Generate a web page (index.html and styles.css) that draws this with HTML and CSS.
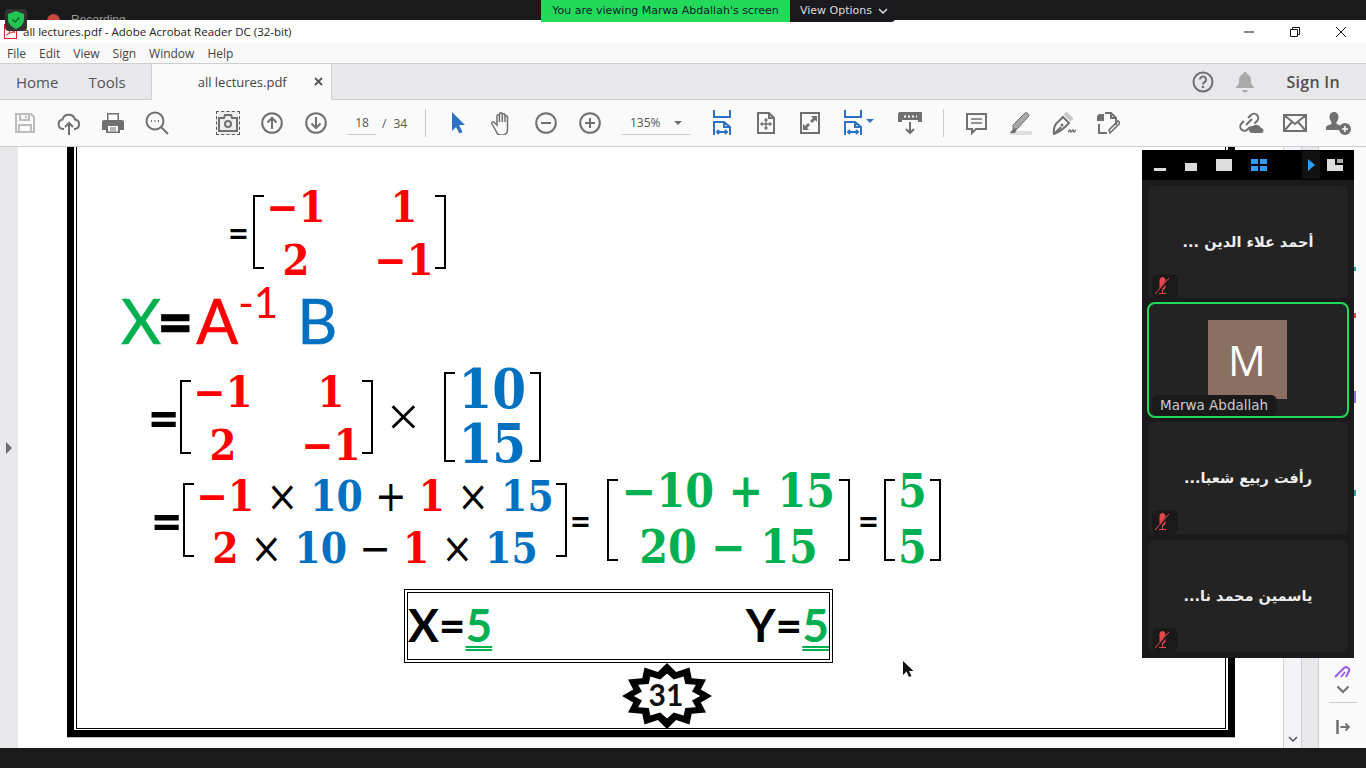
FILE: index.html
```html
<!DOCTYPE html>
<html lang="en">
<head>
    <meta charset="UTF-8">
    <title>all lectures.pdf - Adobe Acrobat Reader DC (32-bit)</title>
    <link rel="stylesheet" href="styles.css">
</head>
<body>
<div class="screen">
    <div class="topbar">
        <span class="rec-dot"></span>
        <span class="rec-text">Recording</span>
    </div>
    <div class="shield">
        <svg width="16" height="18" viewBox="0 0 16 18"><path d="M8 0l8 3v5c0 5-3.500 8-8 10-4.500-2-8-5-8-10V3z" fill="#23c552"/><path d="M4.500 8.500l2.500 2.500 4.500-4.500" fill="none" stroke="#0c6b2c" stroke-width="1.500"/></svg>
    </div>
    <div class="banner">
        <span class="banner-msg">You are viewing Marwa Abdallah's screen</span>
        <span class="banner-opt">View Options
            <svg width="10" height="6" viewBox="0 0 10 6"><path d="M1 1l4 4 4-4" fill="none" stroke="#ddd" stroke-width="1.500"/></svg>
        </span>
    </div>

    <div class="titlebar">
        <svg class="pdf-icon" width="13" height="15" viewBox="0 0 13 15"><rect x="0.500" y="0.500" width="12" height="14" fill="#fff" stroke="#d8232a"/><path d="M2.500 11c3-1 4-4 3.500-8 1 3 3 5 5 5-3 0-6 1-8.500 3z" fill="none" stroke="#d8232a"/></svg>
        <span class="title-text">all lectures.pdf - Adobe Acrobat Reader DC (32-bit)</span>
        <div class="win-btns">
            <span class="win-btn"><svg width="12" height="12" viewBox="0 0 12 12"><path d="M1 6h10" stroke="#111"/></svg></span>
            <span class="win-btn"><svg width="12" height="12" viewBox="0 0 12 12"><path d="M1.500 3.500h7v7h-7zM3.500 3.500v-2h7v7h-2" fill="none" stroke="#111"/></svg></span>
            <span class="win-btn"><svg width="12" height="12" viewBox="0 0 12 12"><path d="M1 1l10 10M11 1L1 11" stroke="#111"/></svg></span>
        </div>
    </div>

    <nav class="menubar">
        <span>File</span><span>Edit</span><span>View</span><span>Sign</span><span>Window</span><span>Help</span>
    </nav>

    <div class="tabbar">
        <span class="tab-link home">Home</span>
        <span class="tab-link tools">Tools</span>
        <div class="doc-tab">
            <span>all lectures.pdf</span>
            <svg class="tab-close" width="9" height="9" viewBox="0 0 9 9"><path d="M1 1l7 7M8 1L1 8" stroke="#555" stroke-width="1.800"/></svg>
        </div>
        <div class="tab-right">
            <svg width="24" height="24" viewBox="0 0 24 24"><circle cx="12" cy="12" r="9.500" class="ln"/><path d="M9 9.500a3 3 0 1 1 4.500 2.600c-1 .6-1.500 1.200-1.500 2.400" class="ln"/><circle cx="12" cy="17" r="1.300" fill="#707070"/></svg>
            <svg class="bell" width="20" height="22" viewBox="0 0 20 22"><path d="M10 1c1.200 0 2 .8 2 2 3 1 4 3.500 4 7 0 3 1 4.500 3 6v1H1v-1c2-1.500 3-3 3-6 0-3.500 1-6 4-7 0-1.200.8-2 2-2zM7.500 19h5a2.500 2.500 0 0 1-5 0z" fill="#aaa"/></svg>
            <span class="sign-in">Sign In</span>
        </div>
    </div>

    <div class="toolbar">
        <span class="tool"><svg width="24" height="24" viewBox="0 0 24 24"><path d="M3 3h15l3 3v15H3zM7 3v6h9V3M6 21v-7h12v7M13 5v2" fill="none" stroke="#bcbcbc" stroke-width="2"/></svg></span>
        <span class="tool"><svg width="24" height="24" viewBox="0 0 24 24"><path d="M7 18H6a4.800 4.800 0 0 1-.5-9.500A6.500 6.500 0 0 1 18 8.500a4.800 4.800 0 0 1 0 9.500h-1M12 24V12M8 16l4-4 4 4" class="ln"/></svg></span>
        <span class="tool"><svg width="24" height="24" viewBox="0 0 24 24"><path d="M6 9V2h12v7h3a2 2 0 0 1 2 2v8h-4v3H5v-3H1v-8a2 2 0 0 1 2-2z" fill="#707070"/><path d="M7.500 3.500h9V9h-9zM7 15h10v5.500H7z" fill="#fafafa"/><path d="M9 17h6M9 19h6" stroke="#707070"/></svg></span>
        <span class="tool"><svg width="24" height="24" viewBox="0 0 24 24"><circle cx="10" cy="10" r="8.500" class="ln"/><path d="M16 16l7 7" class="ln"/><path d="M6 10h1M9.500 10h1M13 10h1" stroke="#707070" stroke-width="2"/></svg></span>

        <span class="tool snap"><svg width="20" height="18" viewBox="0 0 20 18"><path d="M1 4h5l1-3h6l1 3h5v13H1z" class="ln"/><circle cx="10" cy="10" r="3" class="ln"/></svg></span>
        <span class="tool"><svg width="24" height="24" viewBox="0 0 24 24"><circle cx="12" cy="12" r="9.800" class="ln"/><path d="M12 18V7M7.500 11.500L12 7l4.500 4.500" class="ln"/></svg></span>
        <span class="tool"><svg width="24" height="24" viewBox="0 0 24 24"><circle cx="12" cy="12" r="9.800" class="ln"/><path d="M12 6v11M7.500 12.500L12 17l4.500-4.500" class="ln"/></svg></span>
        <div class="page-box"><span class="page-num">18</span><span class="page-sep">/</span><span>34</span></div>
        <span class="tool-sep first"></span>

        <span class="tool"><svg width="24" height="24" viewBox="0 0 24 24"><path d="M6 1l13 13h-6l3.500 7-3 1.500L10 16l-4 4z" fill="#2d72c4"/></svg></span>
        <span class="tool"><svg width="24" height="24" viewBox="0 0 24 24"><path d="M6 20l-4-7c-.8-1.600 1-2.700 2.200-1.500L7 14V5c0-1.800 2.500-1.800 2.500 0v6-8c0-1.800 2.800-1.800 2.800 0v8-7c0-1.800 2.700-1.800 2.700 0v7-5c0-1.800 2.500-1.800 2.500 0v12c0 4-2 6-5 6h-2c-2 0-3.500-.8-4.500-4z" fill="none" stroke="#707070" stroke-width="1.500"/></svg></span>
        <span class="tool"><svg width="24" height="24" viewBox="0 0 24 24"><circle cx="12" cy="12" r="9.800" class="ln"/><path d="M7 12h10" class="ln"/></svg></span>
        <span class="tool"><svg width="24" height="24" viewBox="0 0 24 24"><circle cx="12" cy="12" r="9.800" class="ln"/><path d="M7 12h10M12 7v10" class="ln"/></svg></span>
        <div class="zoom-box"><span>135%</span><span class="caret"></span></div>

        <span class="tool"><svg width="20" height="26" viewBox="0 0 20 26"><path d="M2 0v7h16V0M2 25V12h10l6 5v8M12 12v5h6M5 22h10M7 20l-2 2 2 2M13 20l2 2-2 2" fill="none" stroke="#2d72c4" stroke-width="2"/></svg></span>
        <span class="tool"><svg width="24" height="24" viewBox="0 0 24 24"><path d="M4 2h11l5 5v15H4zM15 2v5h5" class="ln"/><path d="M12 8v10M7 13h10M10.500 9.500L12 8l1.500 1.500M10.500 16.500L12 18l1.500-1.500M8.500 11.500L7 13l1.500 1.500M15.500 11.500L17 13l-1.500 1.500" fill="none" stroke="#707070" stroke-width="1.400"/></svg></span>
        <span class="tool"><svg width="24" height="24" viewBox="0 0 24 24"><path d="M3 2h18v20H3z" class="ln"/><path d="M13 5h6v6l-2-2-3 3-2-2 3-3zM11 19H5v-6l2 2 3-3 2 2-3 3z" fill="#707070"/></svg></span>
        <span class="tool fit-menu"><svg width="20" height="26" viewBox="0 0 20 26"><path d="M2 0v7h16V0M2 25V12h10l6 5v8M12 12v5h6M5 22h10M7 20l-2 2 2 2M13 20l2 2-2 2" fill="none" stroke="#2d72c4" stroke-width="2"/></svg><span class="caret blue"></span></span>
        <span class="tool"><svg width="24" height="24" viewBox="0 0 24 24"><path d="M1 2h22v8h-3M4 10H1V2" class="ln"/><path d="M2 3h20v6H2z" fill="#707070"/><path d="M6 5.500h2M10 5.500h2M14 5.500h2M18 5.500h1" stroke="#fafafa" stroke-width="2"/><path d="M12 11v11M8 18l4 4 4-4" class="ln"/></svg></span>
        <span class="tool-sep second"></span>

        <span class="tool"><svg width="24" height="24" viewBox="0 0 24 24"><path d="M3 3h19v15H12l-4 4v-4H3z" class="ln"/><path d="M7 8h11M7 12h11" stroke="#707070" stroke-width="1.500"/></svg></span>
        <span class="tool"><svg width="24" height="24" viewBox="0 0 24 24"><path d="M2 20h22v4H2z" fill="#dedede"/><path d="M5 14L17 2c1.500-1.500 5 1.500 3.500 3.500L9 18H5z" fill="#a8a8a8" stroke="#707070"/><path d="M5 18l-3 4h5l2-4z" fill="#707070"/></svg></span>
        <span class="tool"><svg width="24" height="24" viewBox="0 0 24 24"><path d="M2 23c-1-6 1-10 5-13l4-4 6 6-4 4c-3 3-6 5-11 7zM3 22l6-6" class="ln"/><circle cx="10" cy="14" r="1.500" fill="#707070"/><path d="M13 2l7 7" stroke="#c8c8c8" stroke-width="4"/><path d="M16 21l2-2 1 2 2-2 1 2 2-2" fill="none" stroke="#707070" stroke-width="1.400"/></svg></span>
        <span class="tool"><svg width="24" height="24" viewBox="0 0 24 24"><path d="M1 5l2-2h5v7H1z" fill="#707070"/><path d="M9 2h6l5 5v7M15 2v5h5M3 13v9h8" class="ln"/><path d="M14 22l-1-3 9-9 2 2-9 9z" fill="none" stroke="#707070" stroke-width="1.600"/></svg></span>

        <div class="tool-right">
            <span class="tool"><svg width="26" height="24" viewBox="0 0 26 24"><path d="M8 14l6-6M6 10l-2.500 2.500a4 4 0 0 0 6 6L12 16M10 7l3-3a4 4 0 0 1 6 6l-2.500 2.500" class="ln"/><path d="M14 22a3.500 3.500 0 0 1 1-7 5 5 0 0 1 8 2 2.500 2.500 0 0 1 0 5z" fill="#707070"/></svg></span>
            <span class="tool"><svg width="24" height="18" viewBox="0 0 24 18"><path d="M1 1h22v16H1zM1 1l11 9 11-9M1 17l8-9M23 17l-8-9" class="ln"/></svg></span>
            <span class="tool"><svg width="26" height="24" viewBox="0 0 26 24"><path d="M8 1c3 0 4.500 2.500 4.500 5 0 2-1 4-2 5v2l4 1.500V19H0v-3c0-1 4-2.500 5.500-3v-2c-1-1-2-3-2-5 0-2.500 1.500-5 4.500-5z" fill="#707070"/><circle cx="19" cy="18" r="6" fill="#707070"/><path d="M16 18h6M19 15v6" stroke="#fafafa" stroke-width="1.600"/></svg></span>
        </div>
    </div>

    <div class="workspace">
        <div class="left-pane"><span class="pane-arrow"></span></div>

        <div class="viewer">
            <div class="page">
                <div class="page-inner">
                    <div class="row r1">
                        <span class="eq eq-sm">=</span>
                        <div class="matrix m1">
                            <span class="br br-l"></span>
                            <div class="cells two red">
                                <span>−1</span><span>1</span>
                                <span>2</span><span>−1</span>
                            </div>
                            <span class="br br-r"></span>
                        </div>
                    </div>

                    <div class="row r2">
                        <span class="big green">X</span><span class="big eq-big">=</span><span class="big red-l">A</span><sup class="sup">-1</sup><span class="big blue-l b">B</span>
                    </div>

                    <div class="row r3">
                        <span class="eq eq-md">=</span>
                        <div class="matrix m1">
                            <span class="br br-l"></span>
                            <div class="cells two red">
                                <span>−1</span><span>1</span>
                                <span>2</span><span>−1</span>
                            </div>
                            <span class="br br-r"></span>
                        </div>
                        <span class="times">×</span>
                        <div class="matrix m2">
                            <span class="br br-l"></span>
                            <div class="cells one blue">
                                <span>10</span><span>15</span>
                            </div>
                            <span class="br br-r"></span>
                        </div>
                    </div>

                    <div class="row r4">
                        <span class="eq eq-md">=</span>
                        <div class="matrix m3">
                            <span class="br br-l"></span>
                            <div class="cells one wide">
                                <span><b class="red">−1</b> <i>×</i> <b class="blue">10</b> <i>+</i> <b class="red">1</b> <i>×</i> <b class="blue">15</b></span>
                                <span><b class="red">2</b> <i>×</i> <b class="blue">10</b> <i>−</i> <b class="red">1</b> <i>×</i> <b class="blue">15</b></span>
                            </div>
                            <span class="br br-r"></span>
                        </div>
                        <span class="eq eq-sm e2">=</span>
                        <div class="matrix m4">
                            <span class="br br-l"></span>
                            <div class="cells one green-d">
                                <span>−10 + 15</span><span>20 − 15</span>
                            </div>
                            <span class="br br-r"></span>
                        </div>
                        <span class="eq eq-sm e3">=</span>
                        <div class="matrix m5">
                            <span class="br br-l"></span>
                            <div class="cells one green-d">
                                <span>5</span><span>5</span>
                            </div>
                            <span class="br br-r"></span>
                        </div>
                    </div>

                    <div class="answer">
                        <span class="ans">X=<u>5</u></span>
                        <span class="ans">Y=<u>5</u></span>
                    </div>

                    <div class="star">
                        <svg width="92" height="66" viewBox="-46 -33 92 66">
                            <polygon points="45,0 33.800,6.500 39,16.500 24.700,17.700 22.500,28.600 9.100,24.100 0,33 -9.100,24.100 -22.500,28.600 -24.700,17.700 -39,16.500 -33.800,6.500 -45,0 -33.800,-6.500 -39,-16.500 -24.700,-17.700 -22.500,-28.600 -9.100,-24.100 0,-33 9.100,-24.100 22.500,-28.600 24.700,-17.700 39,-16.500 33.800,-6.500"/>
                            <polygon fill="#fff" transform="scale(.74 .68)" points="45,0 33.800,6.500 39,16.500 24.700,17.700 22.500,28.600 9.100,24.100 0,33 -9.100,24.100 -22.500,28.600 -24.700,17.700 -39,16.500 -33.800,6.500 -45,0 -33.800,-6.500 -39,-16.500 -24.700,-17.700 -22.500,-28.600 -9.100,-24.100 0,-33 9.100,-24.100 22.500,-28.600 24.700,-17.700 39,-16.500 33.800,-6.500"/>
                        </svg>
                        <span class="star-num">31</span>
                    </div>
                </div>
            </div>
        </div>

        <div class="scroll-col"><svg width="10" height="6" viewBox="0 0 10 6"><path d="M1 1l4 4 4-4" fill="none" stroke="#555" stroke-width="1.500"/></svg></div>
        <div class="grey-col"></div>
        <div class="right-pane">
            <span class="peek p1"></span>
            <span class="peek p2"></span>
            <span class="peek p3"></span>
            <span class="peek p4"></span>
            <svg class="pen" width="18" height="12" viewBox="0 0 18 12"><path d="M1 11L10 2c2-2 6 0 5 3l-3 6M7 11l4-5" fill="none" stroke="#9b5de5" stroke-width="2"/></svg>
            <svg class="chev" width="14" height="9" viewBox="0 0 14 9"><path d="M1.500 1.500L7 7l5.500-5.500" fill="none" stroke="#707070" stroke-width="2"/></svg>
            <span class="pane-line"></span>
            <svg class="collapse" width="14" height="14" viewBox="0 0 14 14"><path d="M1.500 0v14" stroke="#707070" stroke-width="2.500"/><path d="M4.500 7H13M9.500 3.500L13 7l-3.500 3.500" fill="none" stroke="#707070" stroke-width="1.800"/></svg>
        </div>
    </div>

    <div class="bottombar"></div>

    <!-- zoom video panel sits over the reader window -->
    <aside class="video-panel">
        <div class="vp-head">
            <span class="vp-i small"></span>
            <span class="vp-i medium"></span>
            <span class="vp-i large"></span>
            <span class="vp-grid"><i></i><i></i><i></i><i></i></span>
            <span class="vp-arrow"><i></i></span>
            <span class="vp-share"><i></i></span>
        </div>
        <div class="tile">
            <span class="tile-name" dir="rtl">أحمد علاء الدين ...</span>
            <span class="mute"><svg width="18" height="18" viewBox="0 0 18 18"><path d="M6 3a2.500 2.500 0 0 1 5 0v7a2.500 2.500 0 0 1-5 0zM5 16.500h7M8.500 13v3" fill="#e5484d" stroke="#e5484d"/><path d="M2.500 17L15.500 1" stroke="#1a1a1a" stroke-width="2.500"/><path d="M1 17L15 1" stroke="#e5484d"/></svg></span>
        </div>
        <div class="tile active">
            <div class="avatar">M</div>
            <span class="name-tag">Marwa Abdallah</span>
        </div>
        <div class="tile">
            <span class="tile-name" dir="rtl">رأفت ربيع شعبا...</span>
            <span class="mute"><svg width="18" height="18" viewBox="0 0 18 18"><path d="M6 3a2.500 2.500 0 0 1 5 0v7a2.500 2.500 0 0 1-5 0zM5 16.500h7M8.500 13v3" fill="#e5484d" stroke="#e5484d"/><path d="M2.500 17L15.500 1" stroke="#1a1a1a" stroke-width="2.500"/><path d="M1 17L15 1" stroke="#e5484d"/></svg></span>
        </div>
        <div class="tile">
            <span class="tile-name" dir="rtl">ياسمين محمد نا...</span>
            <span class="mute"><svg width="18" height="18" viewBox="0 0 18 18"><path d="M6 3a2.500 2.500 0 0 1 5 0v7a2.500 2.500 0 0 1-5 0zM5 16.500h7M8.500 13v3" fill="#e5484d" stroke="#e5484d"/><path d="M2.500 17L15.500 1" stroke="#1a1a1a" stroke-width="2.500"/><path d="M1 17L15 1" stroke="#e5484d"/></svg></span>
        </div>
    </aside>

    <svg class="cursor" width="12" height="19" viewBox="0 0 12 19"><path d="M1 1v14l3.500-3.500L7 17l2.500-1L7 11h4.500z" fill="#111"/></svg>
</div>
</body>
</html>
```

FILE: styles.css
```css
* {
    box-sizing: border-box;
}
html, body {
    margin: 0;
    padding: 0;
}
body {
    font-family: "Open Sans", "Noto Sans", sans-serif;
    color: #444;
    background-color: #1a1a1a;
}
.screen {
    position: relative;
    width: 1366px;
    height: 768px;
    overflow: hidden;
    display: flex;
    flex-direction: column;
}
.ln {
    fill: none;
    stroke: #707070;
    stroke-width: 2;
}

/* top strip */
.topbar {
    height: 20px;
    flex: none;
    overflow: hidden;
    background-color: #1a1a1a;
    display: flex;
    align-items: flex-start;
    padding: 13px 0 0 47px;
    color: #999;
    font-size: 12px;
    font-family: "Liberation Sans", sans-serif;
}
.rec-dot {
    width: 13px;
    height: 13px;
    border-radius: 50%;
    background-color: #c6493f;
    margin-top: 1px;
}
.rec-text {
    margin-left: 11px;
    height: 7px;
    overflow: hidden;
    line-height: 14px;
}
.shield {
    position: absolute;
    left: 5px;
    top: 9px;
    width: 22px;
    height: 22px;
    border-radius: 4px;
    background-color: #333;
    display: flex;
    align-items: center;
    justify-content: center;
}
.banner {
    position: absolute;
    left: 541px;
    top: 0;
    height: 22px;
    display: flex;
    font-family: "DejaVu Sans", sans-serif;
    font-size: 11px;
    line-height: 22px;
}
.banner-msg {
    width: 249px;
    background-color: #23d959;
    color: #123;
    text-align: center;
}
.banner-opt {
    width: 105px;
    background-color: #1a1a1e;
    color: #ddd;
    border-bottom-right-radius: 4px;
    padding-left: 10px;
}
.banner-opt svg {
    margin-left: 2px;
}

/* window chrome */
.titlebar {
    height: 23px;
    flex: none;
    background-color: #fff;
    display: flex;
    align-items: center;
    padding-left: 4px;
    font-size: 11.5px;
    color: #222;
}
.title-text {
    margin-left: 6px;
}
.win-btns {
    margin-left: auto;
    display: flex;
    padding-right: 2px;
}
.win-btn {
    width: 46px;
    display: flex;
    justify-content: center;
}
.menubar {
    height: 21px;
    flex: none;
    background-color: #f9f9fa;
    border-bottom: 1px solid #cfcfcf;
    display: flex;
    align-items: center;
    gap: 13px;
    padding-left: 7px;
    font-size: 12px;
    color: #444;
}
.tabbar {
    height: 36px;
    flex: none;
    background-color: #e8e7ea;
    border-bottom: 1px solid #cfcfcf;
    display: flex;
    align-items: center;
    font-size: 15px;
    color: #555;
}
.tab-link.home {
    margin-left: 16px;
}
.tab-link.tools {
    margin-left: 30px;
}
.doc-tab {
    margin-left: 25px;
    width: 181px;
    height: 36px;
    background-color: #fafafa;
    border-left: 1px solid #cfcfcf;
    border-right: 1px solid #cfcfcf;
    display: flex;
    align-items: center;
    padding-left: 46px;
    font-size: 13px;
    color: #444;
}
.tab-close {
    margin-left: auto;
    margin-right: 8px;
}
.tab-right {
    margin-left: auto;
    display: flex;
    align-items: center;
    padding-right: 26px;
}
.bell {
    margin-left: 20px;
}
.sign-in {
    margin-left: 31px;
    font-size: 16px;
    letter-spacing: .3px;
    font-weight: 600;
    color: #505050;
}
.toolbar {
    height: 47px;
    flex: none;
    background-color: #fafafa;
    border-bottom: 1px solid #cfcfcf;
    display: flex;
    align-items: center;
    padding-left: 3px;
    font-size: 12px;
    color: #555;
}
.tool {
    width: 44px;
    height: 30px;
    display: flex;
    align-items: center;
    justify-content: center;
    flex: none;
}
.tool.snap {
    width: 24px;
    height: 24px;
    margin: 0 10px 0 37px;
    border: 1px dashed #555;
    background-color: #eee;
}
.tool.fit-menu {
    width: 56px;
    justify-content: flex-start;
    padding-left: 11px;
}
.page-box {
    margin-left: 10px;
    width: 66px;
    display: flex;
    align-items: center;
}
.page-num {
    width: 28px;
    text-align: center;
    border-bottom: 1px solid #ccc;
    line-height: 22px;
}
.page-sep {
    margin: 0 7px 0 6px;
}
.tool-sep {
    width: 1px;
    height: 28px;
    background-color: #ccc;
    flex: none;
}
.tool-sep.first {
    margin: 0 10px 0 11px;
}
.tool-sep.second {
    margin: 0 10px 0 11px;
}
.zoom-box {
    margin: 0 10px 0 10px;
    width: 68px;
    height: 24px;
    border-bottom: 1px solid #ccc;
    display: flex;
    align-items: center;
    padding-left: 8px;
}
.caret {
    width: 0;
    height: 0;
    border-left: 4px solid transparent;
    border-right: 4px solid transparent;
    border-top: 4px solid #707070;
    margin-left: 13px;
}
.caret.blue {
    border-top-color: #2d72c4;
    margin-left: 3px;
    margin-bottom: 4px;
}
.tool-right {
    margin-left: auto;
    display: flex;
    padding-right: 5px;
}

/* document area */
.workspace {
    height: 601px;
    flex: none;
    display: flex;
    background-color: #fff;
}
.left-pane {
    width: 18px;
    flex: none;
    background-color: #e8e7ea;
    padding: 295px 0 0 6px;
}
.pane-arrow {
    display: block;
    width: 0;
    height: 0;
    border-top: 6px solid transparent;
    border-bottom: 6px solid transparent;
    border-left: 6px solid #6e6e6e;
}
.viewer {
    width: 1265px;
    flex: none;
    padding-left: 49px;
    background-color: #fff;
}
.page {
    width: 1168px;
    height: 590px;
    border: 7px solid #000;
    border-top: none;
    box-shadow: 0 1px 0 #bbb;
    padding: 0 2px 1px 2px;
}
.page-inner {
    height: 100%;
    border: 1px solid #000;
    border-top: none;
    display: flex;
    flex-direction: column;
    align-items: flex-start;
    font-family: "DejaVu Serif Condensed", "DejaVu Serif", serif;
    font-weight: bold;
}
.row {
    display: flex;
    align-items: center;
    flex: none;
}
.r1 {
    margin-top: 39px;
    height: 92px;
    padding-left: 151px;
}
.r2 {
    margin-top: 12px;
    height: 60px;
    padding-left: 44px;
    align-items: flex-start;
    font-family: Lato, sans-serif;
}
.r3 {
    margin-top: 18px;
    height: 97px;
    padding-left: 71px;
}
.r4 {
    margin-top: 11px;
    height: 88px;
    padding-left: 74px;
}

/* math pieces */
.red { color: #ff0000; }
.blue { color: #0070c0; }
.green-d { color: #00b050; }
.eq {
    font-family: Lato, sans-serif;
    color: #000;
    line-height: 1;
}
.eq-sm {
    font-size: 36px;
    font-weight: 700;
    width: 25px;
}
.eq-md {
    font-size: 54px;
    font-weight: 900;
    width: 32px;
}
.eq-sm.e2 {
    margin-left: 3px;
    width: 37px;
}
.eq-sm.e3 {
    margin-left: 8px;
    width: 26px;
}
.matrix {
    display: flex;
    align-items: stretch;
}
.br {
    width: 11px;
    flex: none;
    border: 2px solid #000;
}
.br-l {
    border-right: none;
}
.br-r {
    border-left: none;
}
.cells {
    display: grid;
    justify-items: center;
    align-items: center;
    line-height: 1;
}
.cells.two {
    grid-template-columns: 56px 56px;
    column-gap: 52px;
    font-size: 43px;
    grid-auto-rows: 53px;
    margin: -14px 3px 0 4px;
}
.m1 {
    height: 74px;
}
.m2 {
    height: 90px;
}
.cells.one.blue {
    font-size: 54px;
    grid-auto-rows: 55px;
    width: 75px;
    margin: -10px 0 0;
}
.m3 {
    height: 74px;
    width: 384px;
}
.cells.wide {
    font-size: 42px;
    word-spacing: -1px;
    grid-auto-rows: 52px;
    width: 362px;
    margin: -12px 0 0;
    white-space: nowrap;
}
.cells.wide i {
    font-style: normal;
    font-weight: normal;
    color: #000;
}
.cells.wide b {
    font-weight: bold;
}
.m4 {
    height: 82px;
    width: 243px;
}
.m4 .cells {
    font-size: 46px;
    grid-auto-rows: 56px;
    width: 221px;
    margin: -16px 0 0;
}
.m5 {
    height: 82px;
    width: 57px;
}
.m5 .cells {
    font-size: 46px;
    grid-auto-rows: 56px;
    width: 35px;
    margin: -16px 0 0;
}
.times {
    font-family: "Liberation Serif", serif;
    font-weight: normal;
    font-size: 58px;
    line-height: 1;
    margin: 0 24px 0 14px;
    color: #000;
}
.big {
    font-size: 62px;
    line-height: 60px;
    font-weight: 400;
    -webkit-text-stroke: .6px;
}
.green {
    color: #00b050;
    letter-spacing: -4px;
}
.red-l { color: #ff0000; }
.blue-l { color: #0070c0; }
.eq-big {
    color: #000;
    font-weight: 900;
    margin: 0 3px 0 0;
}
.sup {
    color: #ff0000;
    font-size: 42px;
    font-weight: 400;
    line-height: 1;
    margin-top: -9px;
    vertical-align: baseline;
}
.b {
    margin-left: 19px;
}

/* result box */
.answer {
    margin: 25px 0 0 327px;
    width: 429px;
    height: 74px;
    flex: none;
    border: 4px double #000;
    display: flex;
    justify-content: space-between;
    align-items: center;
    padding: 0 0 2px 0;
    font-family: Lato, sans-serif;
    font-size: 46px;
    font-weight: 700;
    color: #000;
    line-height: 1;
}
.ans u {
    color: #00b050;
    text-decoration: underline double;
    text-decoration-thickness: 2px;
    text-underline-offset: 4px;
}
.star {
    margin-left: 544px;
    height: 66px;
    width: 92px;
    flex: none;
    display: grid;
    place-items: center;
}
.star svg, .star-num {
    grid-area: 1 / 1;
}
.star-num {
    font-family: Lato, sans-serif;
    font-size: 30px;
    color: #111;
    line-height: 1;
    margin: 0 2px 5px 0;
}

/* right side of the reader */
.scroll-col {
    width: 18px;
    flex: none;
    background-color: #f4f4f6;
    border-left: 1px solid #cfcfcf;
    display: flex;
    align-items: flex-end;
    justify-content: center;
    padding-bottom: 6px;
}
.grey-col {
    width: 18px;
    flex: none;
    background-color: #e8e7ea;
    border-left: 1px solid #cfcfcf;
    border-right: 1px solid #cfcfcf;
}
.right-pane {
    position: relative;
    flex: 1;
    background-color: #fafafa;
    display: flex;
    flex-direction: column;
    align-items: center;
    padding-top: 519px;
}
.peek {
    position: absolute;
    left: 35px;
    width: 2px;
}
.peek.p1 { top: 120px; height: 4px; background-color: #26a69a; }
.peek.p2 { top: 166px; height: 5px; background-color: #e5484d; }
.peek.p3 { top: 244px; height: 12px; background-color: #8f7ae5; }
.peek.p4 { top: 343px; height: 6px; background-color: #26a69a; }
.chev {
    margin-top: 7px;
}
.pane-line {
    width: 28px;
    height: 1px;
    background-color: #ccc;
    margin-top: 8px;
}
.collapse {
    margin-top: 17px;
}
.bottombar {
    height: 20px;
    flex: none;
    background-color: #1a1a1a;
}

/* zoom panel */
.video-panel {
    position: absolute;
    left: 1142px;
    top: 150px;
    width: 212px;
    height: 508px;
    background-color: #1a1a1a;
    padding: 0 6px;
    display: flex;
    flex-direction: column;
    font-family: "DejaVu Sans", sans-serif;
}
.vp-head {
    height: 30px;
    margin: 0 -6px 6px;
    background-color: #000;
    display: flex;
    align-items: flex-end;
    padding: 0 0 9px 12px;
    flex: none;
}
.vp-i {
    background-color: #dcdcdc;
    flex: none;
}
.vp-i.small {
    width: 12px;
    height: 3px;
}
.vp-i.medium {
    width: 12px;
    height: 8px;
    margin-left: 19px;
}
.vp-i.large {
    width: 16px;
    height: 12px;
    margin-left: 19px;
}
.vp-grid {
    margin-left: 19px;
    width: 16px;
    height: 12px;
    display: grid;
    grid-template-columns: 7px 7px;
    grid-template-rows: 5px 5px;
    gap: 2px;
}
.vp-grid i {
    background-color: #2d9cff;
}
.vp-arrow {
    margin: 0 7px 0 35px;
    width: 18px;
    height: 28px;
    background-color: #111;
    display: flex;
    align-items: center;
    justify-content: center;
    align-self: flex-end;
    margin-bottom: -8px;
}
.vp-arrow i {
    border-top: 6px solid transparent;
    border-bottom: 6px solid transparent;
    border-left: 7px solid #2d9cff;
}
.vp-share {
    width: 16px;
    height: 12px;
    background-color: #dcdcdc;
    position: relative;
}
.vp-share i {
    position: absolute;
    right: 0;
    top: 0;
    width: 8px;
    height: 6px;
    background-color: #000;
    border: 2px solid #000;
    border-top: none;
    border-right: none;
    box-shadow: inset 0 0 0 2px #aaa;
}
.tile {
    position: relative;
    height: 112px;
    flex: none;
    background-color: #232323;
    border-radius: 6px;
    margin-bottom: 6px;
    display: flex;
    align-items: center;
    justify-content: center;
}
.tile.active {
    height: 116px;
    margin: -2px -1px 4px;
    border: 2px solid #23d959;
    border-radius: 8px;
}
.tile-name {
    color: #eee;
    font-size: 14.5px;
    font-weight: bold;
}
.mute {
    position: absolute;
    left: 4px;
    bottom: 0;
    width: 26px;
    height: 24px;
    border-radius: 6px;
    background-color: #1a1a1a;
    display: flex;
    align-items: center;
    justify-content: center;
    padding-right: 5px;
}
.avatar {
    width: 79px;
    height: 79px;
    background-color: #8b6f63;
    color: #fff;
    font-family: "Open Sans", sans-serif;
    font-size: 42px;
    display: flex;
    align-items: center;
    justify-content: center;
    margin: -2px 2px 0 0;
}
.name-tag {
    position: absolute;
    left: 3px;
    bottom: 0;
    height: 21px;
    width: 125px;
    padding-left: 8px;
    background-color: #1a1a1a;
    border-radius: 6px;
    color: #ccc;
    font-size: 13.5px;
    line-height: 21px;
}
.cursor {
    position: absolute;
    left: 902px;
    top: 660px;
}
```
